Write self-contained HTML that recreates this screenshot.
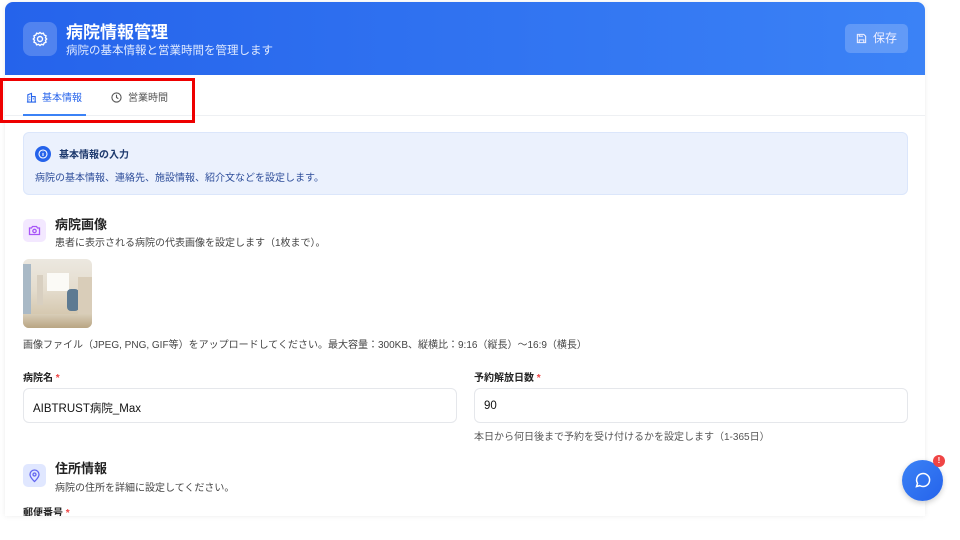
<!DOCTYPE html>
<html><head><meta charset="utf-8"><style>
*{box-sizing:border-box;margin:0;padding:0}
body{width:960px;height:540px;overflow:hidden;background:#fff;font-family:"Liberation Sans","Noto Sans CJK JP",sans-serif;position:relative}
.card{position:absolute;left:5px;top:2px;width:920px;height:514px;background:#fff;border-radius:8px 8px 0 0;box-shadow:0 0 6px rgba(0,0,0,.08);overflow:hidden}
.hdr{position:absolute;left:0;top:0;width:920px;height:73px;background:linear-gradient(90deg,#2563eb,#3b82f6)}
.gear{position:absolute;left:18px;top:20px;width:34px;height:34px;border-radius:8px;background:rgba(255,255,255,.2)}
.t1{position:absolute;left:61px;top:16px;color:#fff;font-size:17px;font-weight:bold}
.t2{position:absolute;left:61px;top:40px;color:#e0eaff;font-size:11.5px}
.save{position:absolute;left:840px;top:22px;width:63px;height:29px;border-radius:5px;background:rgba(255,255,255,.2);color:#eef;font-size:12px;line-height:29px;padding-left:28px}
.tabs{position:absolute;left:0;top:73px;width:920px;height:41px;border-bottom:1px solid #eef0f3}
.tab{position:absolute;top:14px;font-size:10px}
.ul{position:absolute;left:18px;top:39px;width:63px;height:2px;background:#3b82f6}
.info{position:absolute;left:18px;top:130px;width:885px;height:63px;background:#ebf1fd;border:1px solid #dbe6fb;border-radius:6px}
.ic{position:absolute;width:23px;height:23px;border-radius:5px}
.lbl{position:absolute;font-size:10px;font-weight:bold;color:#222}
.req{color:#ef4444}
.inp{position:absolute;top:386px;height:35px;border:1px solid #e5e7eb;border-radius:6px;font-size:11.5px;color:#111;padding:11px 0 0 9px}
.small{position:absolute;font-size:10px;color:#555}
.redbox{position:absolute;left:0;top:78px;width:195px;height:45px;border:3px solid #e00}
.chat{position:absolute;left:902px;top:460px;width:41px;height:41px;border-radius:50%;background:linear-gradient(135deg,#3b82f6,#2563eb);box-shadow:0 2px 6px rgba(0,0,0,.2)}
.badge{position:absolute;left:933px;top:455px;width:12px;height:12px;border-radius:50%;background:#ef4444;color:#fff;font-size:8px;font-weight:bold;text-align:center;line-height:12px}
</style></head><body>
<div class="card">
 <div class="hdr">
  <div class="gear"><svg width="34" height="34" viewBox="0 0 34 34" fill="none" stroke="#fff" stroke-width="1.4"><circle cx="17" cy="17" r="2.5"/><path d="M17 10.5l1.5 1.2 1.9-.5.8 1.8 1.8.8-.5 1.9 1.2 1.3-1.2 1.3.5 1.9-1.8.8-.8 1.8-1.9-.5L17 23.5l-1.5-1.2-1.9.5-.8-1.8-1.8-.8.5-1.9L10.3 17l1.2-1.3-.5-1.9 1.8-.8.8-1.8 1.9.5z"/></svg></div>
  <div class="t1">病院情報管理</div>
  <div class="t2">病院の基本情報と営業時間を管理します</div>
  <div class="save"><svg style="position:absolute;left:11px;top:9px" width="11" height="11" viewBox="0 0 12 12" fill="none" stroke="#eef" stroke-width="1.2"><path d="M1.5 1.5h7l2 2v7h-9z"/><path d="M3.5 10.5v-3h5v3M3.5 1.5v2h4"/></svg>保存</div>
 </div>
 <div class="tabs">
  <div class="tab" style="left:21px;color:#2563eb"><svg style="vertical-align:-2px;margin-right:5px" width="11" height="11" viewBox="0 0 12 12" fill="none" stroke="#2563eb" stroke-width="1.2"><path d="M2 11V3l4-1.5V11M6 5h4v6M1 11h10M4 5v1M4 8v1M8 7v1"/></svg>基本情報</div>
  <div class="tab" style="left:106px;color:#555"><svg style="vertical-align:-2px;margin-right:6px" width="11" height="11" viewBox="0 0 12 12" fill="none" stroke="#555" stroke-width="1.2"><circle cx="6" cy="6" r="5"/><path d="M6 3v3l2 1.2"/></svg>営業時間</div>
  <div class="ul"></div>
 </div>
 <div class="info">
  <div style="position:absolute;left:11px;top:13px;width:16px;height:16px;border-radius:50%;background:#2563eb"><svg width="16" height="16" viewBox="0 0 16 16" fill="none" stroke="#fff" stroke-width="1.1"><circle cx="8" cy="8" r="4"/><path d="M8 7v3M8 5.8v.3"/></svg></div>
  <div style="position:absolute;left:35px;top:13px;font-size:10px;font-weight:bold;color:#1e3a6e">基本情報の入力</div>
  <div style="position:absolute;left:11px;top:36px;font-size:10px;color:#2d4d9a">病院の基本情報、連絡先、施設情報、紹介文などを設定します。</div>
 </div>
 <div class="ic" style="left:18px;top:217px;background:#f3e8ff"><svg width="23" height="23" viewBox="0 0 23 23" fill="none" stroke="#a855f7" stroke-width="1.3"><path d="M6.5 9h2l1-1.5h4l1 1.5h2v6.5h-10z"/><circle cx="11.5" cy="12" r="1.7"/></svg></div>
 <div style="position:absolute;left:50px;top:212px;font-size:13px;font-weight:bold;color:#222">病院画像</div>
 <div class="small" style="left:50px;top:232px;color:#444">患者に表示される病院の代表画像を設定します（1枚まで）。</div>
 <div style="position:absolute;left:18px;top:257px;width:69px;height:69px;border-radius:6px;overflow:hidden;background:linear-gradient(180deg,#ece8e0 0%,#e4dccd 45%,#cdbd9f 100%)">
  <div style="position:absolute;left:0;top:5px;width:8px;height:56px;background:#a9b9c6"></div>
  <div style="position:absolute;left:24px;top:14px;width:22px;height:18px;background:#fbfaf6"></div>
  <div style="position:absolute;left:14px;top:16px;width:6px;height:30px;background:#d8cfc0"></div>
  <div style="position:absolute;left:44px;top:30px;width:12px;height:22px;background:#5d7a92;border-radius:4px"></div>
  <div style="position:absolute;left:55px;top:18px;width:14px;height:42px;background:#d9cdb9"></div>
  <div style="position:absolute;left:0;top:55px;width:69px;height:14px;background:linear-gradient(180deg,#d8cdb8,#b9a583)"></div>
 </div>
 <div class="small" style="left:18px;top:334px;color:#444">画像ファイル（JPEG, PNG, GIF等）をアップロードしてください。最大容量：300KB、縦横比：9:16（縦長）〜16:9（横長）</div>
 <div class="lbl" style="left:18px;top:367px">病院名 <span class="req">*</span></div>
 <div class="lbl" style="left:469px;top:367px">予約解放日数 <span class="req">*</span></div>
 <div class="inp" style="left:18px;width:434px">AIBTRUST病院_Max</div>
 <div class="inp" style="left:469px;width:434px">90</div>
 <div class="small" style="left:469px;top:426px">本日から何日後まで予約を受け付けるかを設定します（1-365日）</div>
 <div class="ic" style="left:18px;top:462px;background:#e0e7ff"><svg width="23" height="23" viewBox="0 0 23 23" fill="none" stroke="#6366f1" stroke-width="1.3"><path d="M11.5 17.5s-4.5-4-4.5-7a4.5 4.5 0 019 0c0 3-4.5 7-4.5 7z"/><circle cx="11.5" cy="10.5" r="1.5"/></svg></div>
 <div style="position:absolute;left:50px;top:456px;font-size:13px;font-weight:bold;color:#222">住所情報</div>
 <div class="small" style="left:50px;top:477px;color:#444">病院の住所を詳細に設定してください。</div>
 <div class="lbl" style="left:18px;top:502px">郵便番号 <span class="req">*</span></div>
</div>
<div class="redbox"></div>
<div class="chat"><svg width="41" height="41" viewBox="0 0 41 41" fill="none" stroke="#fff" stroke-width="1.5"><path d="M14.5 26.5l1-3.2a6.5 6.5 0 112.3 2.3z"/></svg></div>
<div class="badge">!</div>
</body></html>
